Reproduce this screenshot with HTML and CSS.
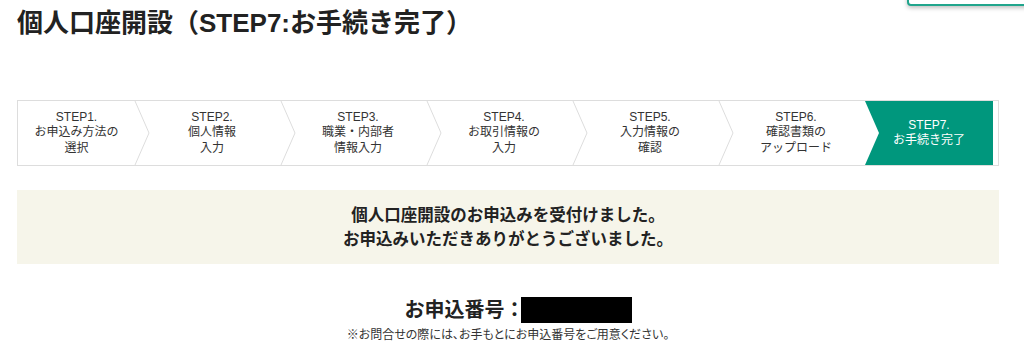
FILE: index.html
```html
<!DOCTYPE html>
<html lang="ja">

<head>
    <meta charset="utf-8">
    <title>個人口座開設（STEP7:お手続き完了）</title>
    <link rel="stylesheet" href="styles.css">
</head>

<body>
    <!-- floating button, mostly outside the window -->
    <div class="float-btn"></div>

    <div class="page">
        <h1 class="page-title">個人口座開設（STEP7:お手続き完了）</h1>

        <!-- step bar -->
        <ol class="steps">
            <li class="step step-first">STEP1.<br>お申込み方法の<br>選択
                <svg class="chev" width="16" height="64" viewBox="0 0 16 64"><polyline points="1,0 15,32 1,64" /></svg>
            </li>
            <li class="step">STEP2.<br>個人情報<br>入力
                <svg class="chev" width="16" height="64" viewBox="0 0 16 64"><polyline points="1,0 15,32 1,64" /></svg>
            </li>
            <li class="step">STEP3.<br>職業・内部者<br>情報入力
                <svg class="chev" width="16" height="64" viewBox="0 0 16 64"><polyline points="1,0 15,32 1,64" /></svg>
            </li>
            <li class="step">STEP4.<br>お取引情報の<br>入力
                <svg class="chev" width="16" height="64" viewBox="0 0 16 64"><polyline points="1,0 15,32 1,64" /></svg>
            </li>
            <li class="step">STEP5.<br>入力情報の<br>確認
                <svg class="chev" width="16" height="64" viewBox="0 0 16 64"><polyline points="1,0 15,32 1,64" /></svg>
            </li>
            <li class="step">STEP6.<br>確認書類の<br>アップロード</li>
            <li class="step step-current">STEP7.<br>お手続き完了</li>
        </ol>

        <div class="done-box">
            個人口座開設のお申込みを受付けました。<br>
            お申込みいただきありがとうございました。
        </div>

        <div class="app-no">
            <span class="app-no-label">お申込番号：</span><span class="app-no-value"></span>
        </div>
        <p class="app-note">※お問合せの際には、お手もとにお申込番号をご用意ください。</p>
    </div>
</body>

</html>
```

FILE: styles.css
```css
body {
    margin: 0;
    font-family: "Liberation Sans", "Noto Sans CJK JP", sans-serif;
    color: #222;
    background: #fff;
}

.page {
    padding: 0 25px 0 17px;
}

.float-btn {
    position: absolute;
    top: -40px;
    left: 907px;
    width: 160px;
    height: 42px;
    border: 2px solid #20a58c;
    border-radius: 4px;
    background: #fff;
    box-shadow: 0 2px 4px rgba(0, 0, 0, 0.25);
}

.page-title {
    margin: 0;
    padding-top: 7px;
    font-size: 26px;
    line-height: 32px;
    font-weight: bold;
    color: #222;
}

/* step bar */
.steps {
    list-style: none;
    display: flex;
    margin: 61px 0 0;
    padding: 0 5px 0 0;
    height: 64px;
    border: 1px solid #ddd;
    font-size: 12px;
    line-height: 15.5px;
    color: #333;
}

.step {
    position: relative;
    width: 146px;
    display: flex;
    align-items: center;
    justify-content: center;
    text-align: center;
    padding-left: 8px;
    box-sizing: border-box;
}

.step-first {
    width: 117px;
    padding-left: 0;
}

.chev {
    position: absolute;
    top: 0;
    right: -15px;
    z-index: 1;
}

.chev polyline {
    fill: #fff;
    stroke: #ddd;
    stroke-width: 1;
}

.step-current {
    width: 128px;
    padding-left: 0;
    background: #00977d;
    color: #fff;
    clip-path: polygon(0 0, 100% 0, 100% 100%, 0 100%, 14px 50%);
}

.done-box {
    margin-top: 24px;
    padding: 13px 0;
    background: #f6f5ea;
    text-align: center;
    font-size: 16.5px;
    line-height: 24px;
    font-weight: bold;
    color: #222;
}

.app-no {
    margin-top: 33px;
    display: flex;
    justify-content: center;
    align-items: center;
    padding-left: 20px;
    font-size: 20px;
    font-weight: bold;
    line-height: 26px;
}

.app-no-value {
    display: inline-block;
    width: 111px;
    height: 26px;
    margin-left: -4px;
    background: #000;
}

.app-note {
    margin: 4px 0 0;
    text-align: center;
    font-size: 12px;
    line-height: 16px;
    color: #333;
    font-feature-settings: "palt";
}
```
